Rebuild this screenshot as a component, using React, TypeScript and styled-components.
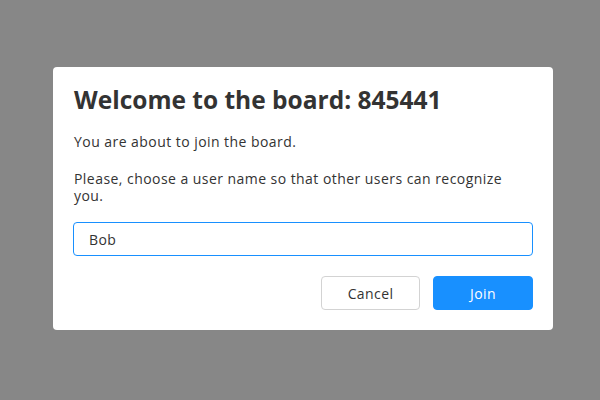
import React from "react";
import styled, { createGlobalStyle } from "styled-components";

const Global = createGlobalStyle`
  html, body { margin: 0; padding: 0; }
  body { font-family: "Open Sans", "Noto Sans", sans-serif; }
`;

const Backdrop = styled.div`
  width: 600px;
  height: 400px;
  background: #878787;
  display: flex;
  align-items: flex-start;
  justify-content: center;
  padding: 67px 0 0 6px;
  box-sizing: border-box;
`;

const Dialog = styled.div`
  width: 500px;
  box-sizing: border-box;
  background: #fff;
  border-radius: 4px;
  padding: 17px 20px 20px 20px;
  color: #333;
`;

const Title = styled.h1`
  margin: 0 0 0 1px;
  font-size: 24.5px;
  font-weight: 700;
  line-height: 32px;
  color: #333;
`;

const Text = styled.p<{ $mt: number }>`
  margin: ${(p) => p.$mt}px 0 0 1px;
  font-size: 14px;
  line-height: 17px;
  letter-spacing: 0.45px;
  color: #333;
`;

const Input = styled.input`
  display: block;
  width: 100%;
  box-sizing: border-box;
  margin-top: 18px;
  height: 34px;
  border: 1px solid #1890ff;
  border-radius: 4px;
  padding: 0 15px;
  font-family: inherit;
  font-size: 14px;
  letter-spacing: 0.4px;
  color: #333;
  outline: none;
  caret-color: #000;
`;

const Actions = styled.div`
  display: flex;
  justify-content: flex-end;
  gap: 13px;
  margin-top: 20px;
`;

const Button = styled.button<{ $primary?: boolean }>`
  width: ${(p) => (p.$primary ? 100 : 99)}px;
  height: 34px;
  border-radius: 4px;
  font-family: inherit;
  font-size: 14px;
  letter-spacing: 0.4px;
  cursor: pointer;
  border: 1px solid ${(p) => (p.$primary ? "#1890ff" : "#d3d3d3")};
  background: ${(p) => (p.$primary ? "#1890ff" : "#fff")};
  color: ${(p) => (p.$primary ? "#fff" : "#333")};
`;

export default function App() {
  return (
    <>
      <Global />
      <Backdrop>
        <Dialog>
          <Title>Welcome to the board: 845441</Title>
          <Text $mt={17}>You are about to join the board.</Text>
          <Text $mt={20}>
            Please, choose a user name so that other users can recognize you.
          </Text>
          <Input defaultValue="Bob" autoFocus />
          <Actions>
            <Button>Cancel</Button>
            <Button $primary>Join</Button>
          </Actions>
        </Dialog>
      </Backdrop>
    </>
  );
}
